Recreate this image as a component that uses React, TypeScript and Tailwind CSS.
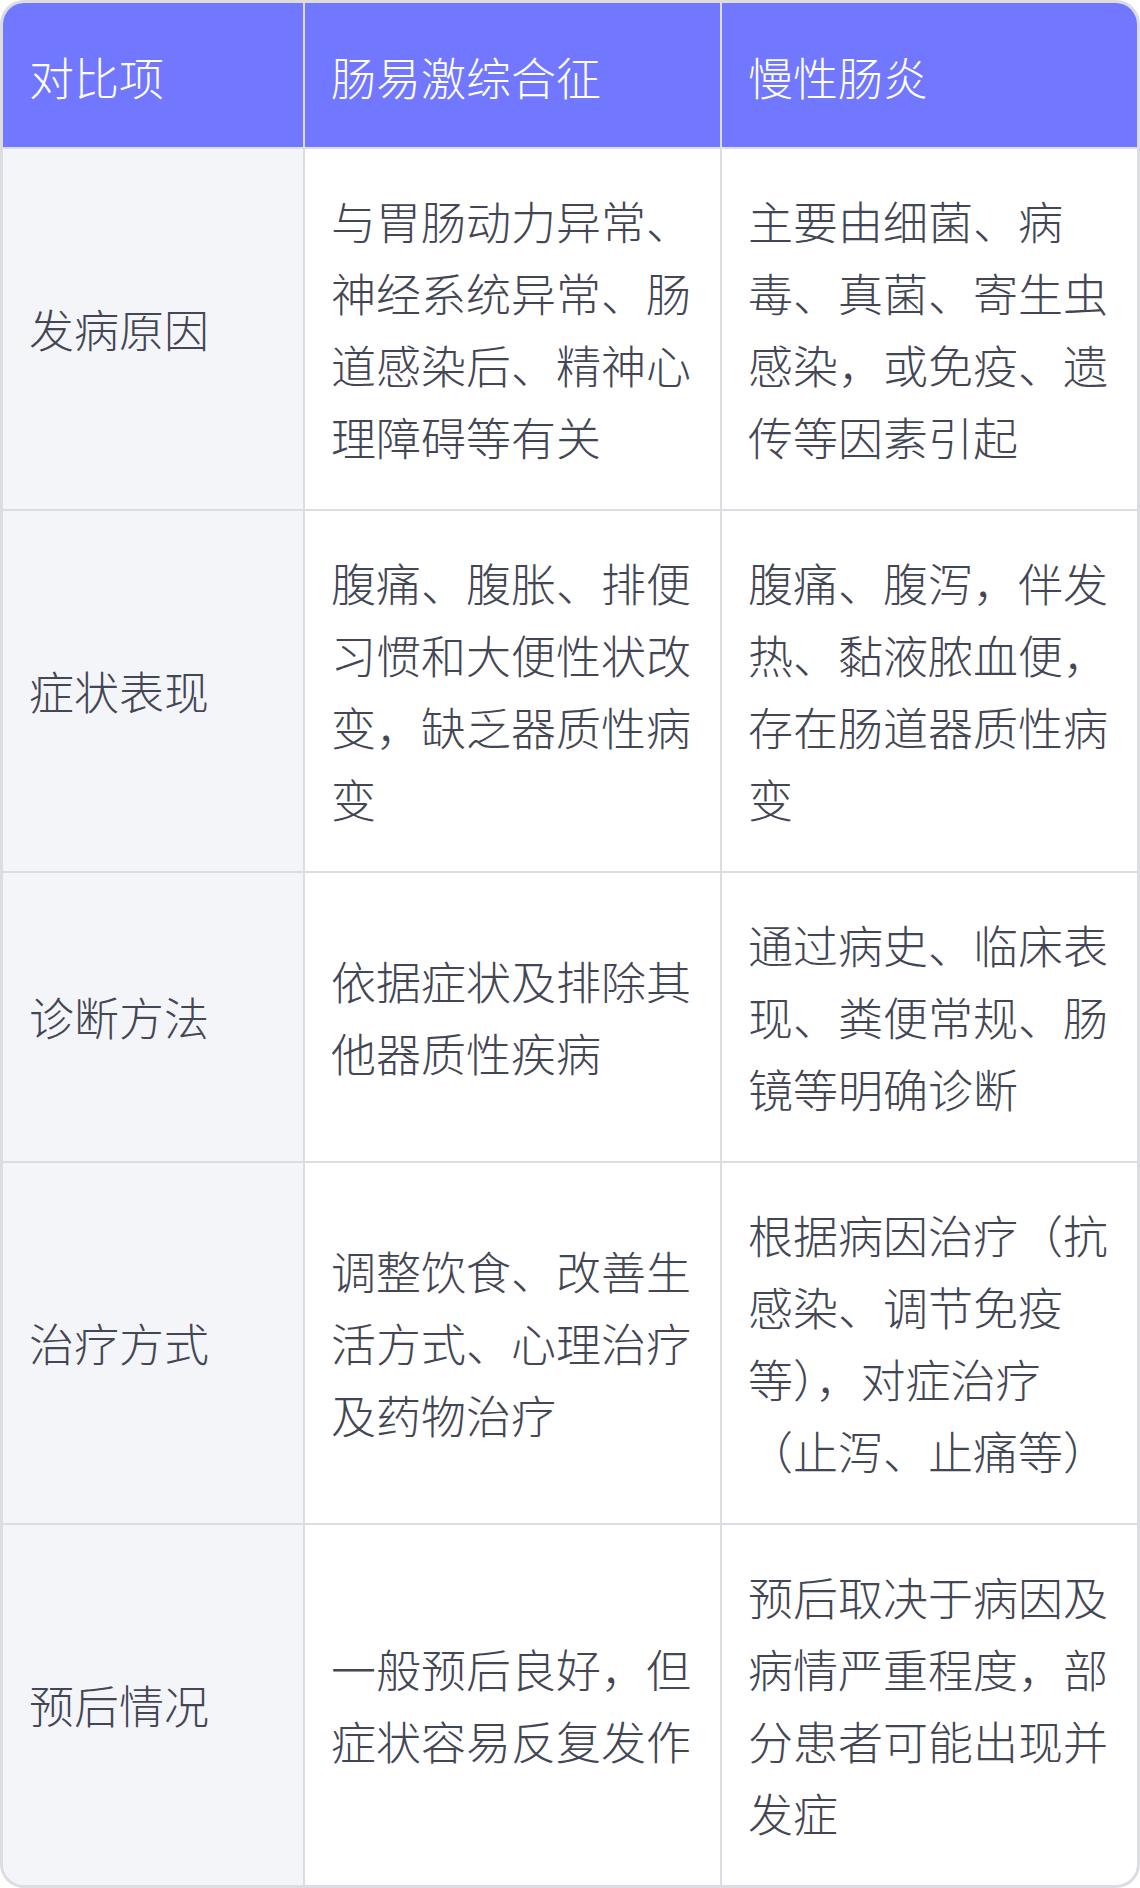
const rows = [
  {
    item: "发病原因",
    ibs: "与胃肠动力异常、神经系统异常、肠道感染后、精神心理障碍等有关",
    colitis: "主要由细菌、病毒、真菌、寄生虫感染，或免疫、遗传等因素引起",
  },
  {
    item: "症状表现",
    ibs: "腹痛、腹胀、排便习惯和大便性状改变，缺乏器质性病变",
    colitis: "腹痛、腹泻，伴发热、黏液脓血便，存在肠道器质性病变",
  },
  {
    item: "诊断方法",
    ibs: "依据症状及排除其他器质性疾病",
    colitis: "通过病史、临床表现、粪便常规、肠镜等明确诊断",
  },
  {
    item: "治疗方式",
    ibs: "调整饮食、改善生活方式、心理治疗及药物治疗",
    colitis: "根据病因治疗（抗感染、调节免疫等），对症治疗（止泻、止痛等）",
  },
  {
    item: "预后情况",
    ibs: "一般预后良好，但症状容易反复发作",
    colitis: "预后取决于病因及病情严重程度，部分患者可能出现并发症",
  },
];

const App = () => {
  return (
    <div
      className="w-[1140px] bg-white font-light"
      style={{ fontFamily: '"Noto Sans CJK SC", "Noto Sans", sans-serif' }}
    >
      <div className="overflow-hidden rounded-[24px] border-[3px] border-[#dcdde2]">
        <table className="w-full table-fixed border-collapse text-[45px] leading-[72px]">
          <colgroup>
            <col className="w-[301px]" />
            <col className="w-[417px]" />
            <col />
          </colgroup>
          <thead>
            <tr className="bg-[#7177ff] text-white">
              <th className="border-r-2 border-b-2 border-[#dcdde2] pl-[26px] pr-5 pt-[38px] pb-[34px] text-left font-light">
                对比项
              </th>
              <th className="border-r-2 border-b-2 border-[#dcdde2] pl-[26px] pr-5 pt-[38px] pb-[34px] text-left font-light">
                肠易激综合征
              </th>
              <th className="border-b-2 border-[#dcdde2] pl-[26px] pr-5 pt-[38px] pb-[34px] text-left font-light">
                慢性肠炎
              </th>
            </tr>
          </thead>
          <tbody className="text-[#434654]">
            {rows.map((r, i) => {
              const last = i === rows.length - 1;
              return (
                <tr key={r.item}>
                  <td
                    className={`border-r-2 border-[#dcdde2] bg-[#f4f5f9] pl-[26px] pr-5 py-[36px] align-middle ${
                      last ? "" : "border-b-2"
                    }`}
                  >
                    {r.item}
                  </td>
                  <td
                    className={`border-r-2 border-[#dcdde2] pl-[26px] pr-5 py-[36px] align-middle ${
                      last ? "" : "border-b-2"
                    }`}
                  >
                    {r.ibs}
                  </td>
                  <td
                    className={`border-[#dcdde2] pl-[26px] pr-5 py-[36px] align-middle ${
                      last ? "" : "border-b-2"
                    }`}
                  >
                    {r.colitis}
                  </td>
                </tr>
              );
            })}
          </tbody>
        </table>
      </div>
    </div>
  );
};

export default App;
